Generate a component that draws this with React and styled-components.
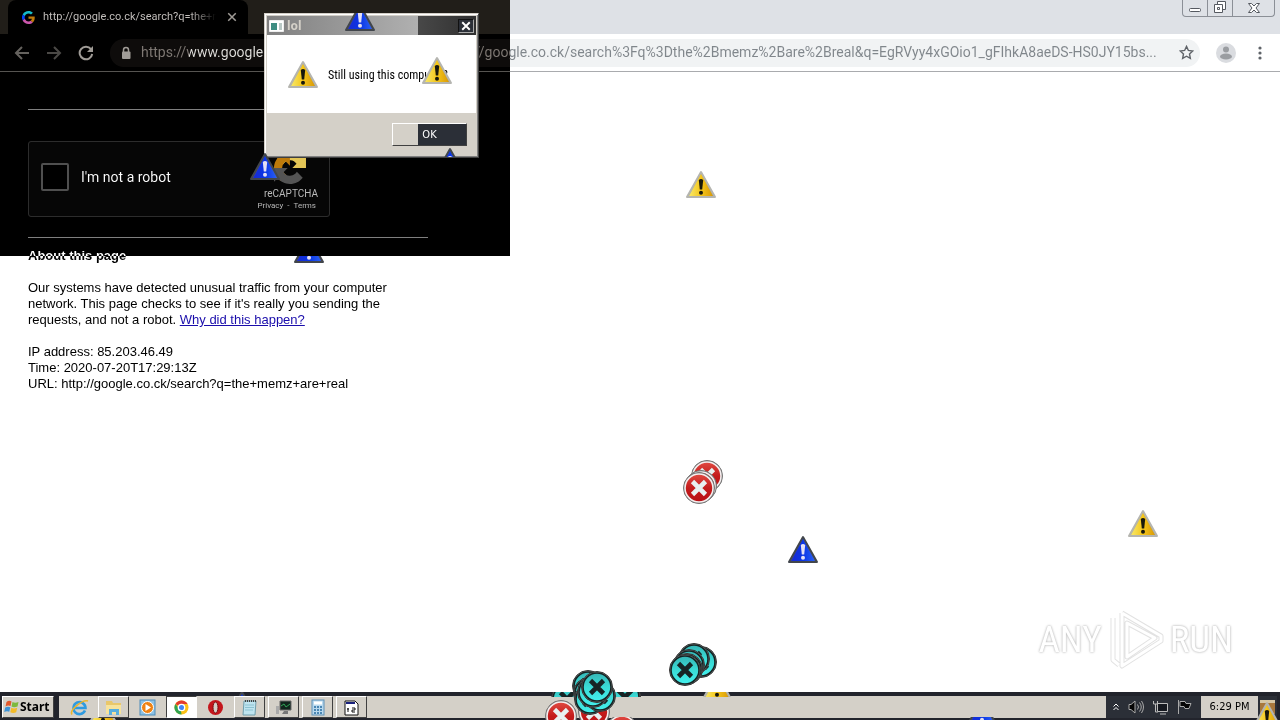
import React from 'react';
import styled, { createGlobalStyle } from 'styled-components';

const TAHOMA = '"DejaVu Sans Condensed", "DejaVu Sans", sans-serif';
const ARIAL = '"Liberation Sans", Arial, sans-serif';

const Global = createGlobalStyle`
  * { box-sizing: border-box; }
  body { margin: 0; background: #fff; font-family: ${ARIAL}; color: #000; }
  button, input { font: inherit; margin: 0; padding: 0; }
  button { border: 0; background: none; color: inherit; }
  svg { display: block; flex: none; }
`;

const Desktop = styled.div`
  position: relative;
  isolation: isolate;
  display: flex;
  flex-direction: column;
  min-height: 100vh;
  overflow: hidden;
  background: #fff;
`;

/* ---------- browser window ---------- */
const TabStrip = styled.header`
  display: flex;
  justify-content: space-between;
  height: 34px;
  padding: 0 5px 0 8px;
  background: #dee1e6;
`;
const Tab = styled.div`
  display: flex;
  align-items: center;
  gap: 8px;
  width: 240px;
  padding: 0 8px 0 14px;
  border-radius: 8px 8px 0 0;
  background: #fff;
  color: #3c4043;
`;
const TabTitle = styled.span`
  flex: 1;
  min-width: 0;
  white-space: nowrap;
  font: 11px/16px Roboto, sans-serif;
  mask-image: linear-gradient(90deg, #000 85%, transparent);
`;
const IconButton = styled.button`
  display: grid;
  place-items: center;
  width: ${(p) => p.$size || 16}px;
  height: ${(p) => p.$size || 16}px;
`;
const WindowControls = styled.div`
  display: flex;
  height: 17px;
  border: 1px solid #8b8f96;
  border-top: 0;
  border-radius: 0 0 4px 4px;
`;
const WindowControl = styled.button`
  display: grid;
  place-items: center;
  width: ${(p) => p.$width}px;
  & + & { border-left: 1px solid #8b8f96; }
`;
const Toolbar = styled.div`
  display: flex;
  align-items: center;
  gap: 16px;
  height: 38px;
  padding: 0 12px 0 14px;
  background: #fff;
  border-bottom: 1px solid #a9abae;
`;
const AddressBar = styled.form`
  display: flex;
  flex: 1;
  align-items: center;
  gap: 9px;
  height: 28px;
  padding: 0 6px 0 10px;
  border-radius: 14px;
  background: #f1f3f4;
`;
const Address = styled.input`
  flex: 1;
  min-width: 0;
  height: 24px;
  padding-bottom: 2px;
  border: 0;
  outline: 0;
  color: #3c4043;
  font: 14px/22px Roboto, sans-serif;
  background: linear-gradient(90deg, #80868b 48px, #202124 48px 152px, #80868b 152px);
  background-clip: text;
  -webkit-text-fill-color: transparent;
`;

/* ---------- page ---------- */
const Page = styled.main`
  flex: 1;
  width: 100%;
  max-width: 456px;
  padding: 37px 28px 0;
  font-size: 13px;
  line-height: 16px;
`;
const Rule = styled.hr`
  height: 1px;
  margin: 0;
  border: 0;
  background: #808080;
`;
const Captcha = styled.section`
  display: flex;
  align-items: center;
  justify-content: space-between;
  width: 302px;
  height: 76px;
  margin: 31px 0 20px;
  padding: 0 11px 0 12px;
  border: 1px solid #d3d3d3;
  border-radius: 3px;
  background: #f9f9f9;
`;
const CheckLabel = styled.label`
  display: flex;
  align-items: center;
  gap: 12px;
  padding-bottom: 4px;
  font: 14px/18px Roboto, sans-serif;
`;
const Check = styled.input`
  appearance: none;
  width: 28px;
  height: 28px;
  border: 2px solid #b0b0b0;
  border-radius: 2px;
  background: #fff;
`;
const Brand = styled.div`
  display: flex;
  flex-direction: column;
  align-items: flex-end;
  padding-top: 6px;
  color: #444;
  font: 10px/12px Roboto, sans-serif;
  svg { margin: 0 12px 4px 0; }
`;
const Legal = styled.div`
  display: flex;
  gap: 4px;
  padding-right: 2px;
  font-size: 8px;
  a { color: inherit; text-decoration: none; }
`;
const Heading = styled.h1`
  margin: 10px 0 16px;
  font-size: 13px;
  line-height: 16px;
`;
const Paragraph = styled.p`
  margin: 0 0 16px;
  white-space: pre-line;
  a { color: #1a0dab; }
`;
const InvertedPatch = styled.div`
  position: absolute;
  top: 0;
  left: 0;
  width: 510px;
  height: 256px;
  background: #fff;
  mix-blend-mode: difference;
  pointer-events: none;
`;

/* ---------- message box ---------- */
const Dialog = styled.section`
  position: absolute;
  left: 264px;
  top: 13px;
  width: 215px;
  padding: 2px;
  border: 1px solid;
  border-color: #d4d0c8 #404040 #404040 #d4d0c8;
  background: #d4d0c8;
  box-shadow: inset 1px 1px #fff, inset -1px -1px #808080;
  font: 12px/14px "Roboto Condensed", Roboto, sans-serif;
`;
const TitleBar = styled.header`
  display: flex;
  align-items: center;
  gap: 3px;
  height: 19px;
  padding: 0 2px;
  background: linear-gradient(90deg, #808080, #b0b0b0 151px, #484848 151px, #303030);
  color: #d4d0c8;
`;
const DialogTitle = styled.h2`
  flex: 1;
  margin: 0;
  font: bold 12px/14px "Noto Sans", sans-serif;
`;
const CloseButton = styled.button`
  display: grid;
  place-items: center;
  width: 16px;
  height: 14px;
  border: 1px solid;
  border-color: #111 #aaa #aaa #111;
  background: #2b2f37;
`;
const Message = styled.div`
  display: flex;
  align-items: center;
  gap: 9px;
  height: 78px;
  padding: 2px 0 0 20px;
  background: #fff;
`;
const DialogFooter = styled.footer`
  display: flex;
  justify-content: flex-end;
  padding: 10px 9px 9px;
`;
const OkButton = styled.button`
  width: 75px;
  height: 23px;
  border: 1px solid;
  border-color: #fff #404040 #404040 #fff;
  background: linear-gradient(90deg, #d4d0c8 25px, #2b2f37 25px);
  color: #fff;
  font: 11px/14px ${TAHOMA};
`;

/* ---------- taskbar ---------- */
const Taskbar = styled.footer`
  display: flex;
  height: 28px;
  padding: 4px 0 2px 2px;
  background: #22242c;
  font: 11px/14px ${TAHOMA};
`;
const StartButton = styled.button`
  display: flex;
  align-items: center;
  width: 52px;
  margin-right: 5px;
  padding-left: 1px;
  border: 1px solid;
  border-color: #fff #404040 #404040 #fff;
  background: #d4d0c8;
  font: bold 12px/14px "Noto Sans", sans-serif;
`;
const TaskList = styled.nav`
  display: flex;
  flex: 1;
  gap: 3px;
  padding-left: 5px;
  background: #d4d0c8;
`;
const Task = styled.button`
  display: grid;
  place-items: center;
  width: 31px;
  border: 1px solid;
  border-color: ${(p) => (p.$state === 'open' ? '#fff #404040 #404040 #fff' : p.$state === 'active' ? '#404040 #fff #fff #404040' : 'transparent')};
  background: ${(p) => (p.$state === 'active' ? '#fff' : 'none')};
`;
const Tray = styled.div`
  display: flex;
  align-items: center;
  gap: 8px;
  width: 95px;
  padding-left: 6px;
  background: #2b2f37;
`;
const Clock = styled.time`
  width: 57px;
  padding-top: 4px;
  background: #d4d0c8;
  text-align: center;
`;
const ShowDesktop = styled.button`
  width: 22px;
  border-right: 3px solid #22242c;
  background: #2b2f37;
`;

/* ---------- stray warning and error icons ---------- */
const Strays = styled.div`
  position: absolute;
  inset: 0;
  overflow: hidden;
  pointer-events: none;
`;
const Stray = styled.svg`
  position: absolute;
  left: ${(p) => p.$x}px;
  top: ${(p) => p.$y}px;
`;
const Watermark = styled.div`
  position: absolute;
  right: 47px;
  bottom: 48px;
  display: flex;
  align-items: center;
  gap: 4px;
  color: #fff;
  font: 37px/64px "Roboto Condensed", ${ARIAL};
  text-shadow: 0 0 2px #bbb, 0 0 3px #ccc;
`;

function TriangleArt({ inverted }) {
  return (
    <>
      <path d="M16 3 30 28H2Z" fill={inverted ? '#56565c' : '#a8a8a4'} stroke={inverted ? '#42464c' : '#b5b5b0'} strokeWidth="2" strokeLinejoin="round" />
      <path d="M16 5 28 27H4Z" fill={inverted ? 'url(#blue)' : 'url(#gold)'} />
      <path d="M13.800 11q2.200-1.800 4.400 0l-1 9.500h-2.400z" fill={inverted ? '#e4e0f4' : '#18180c'} />
      <circle cx="16" cy="23.800" r="2" fill={inverted ? '#e4e0f4' : '#18180c'} />
    </>
  );
}

function CrossArt({ inverted }) {
  return (
    <>
      <circle cx="16" cy="16" r="15.500" fill={inverted ? '#999' : '#666'} stroke={inverted ? '#333' : '#777'} />
      <circle cx="16" cy="16" r="14" fill={inverted ? 'url(#teal)' : 'url(#red)'} stroke={inverted ? '#152424' : '#f5eeee'} strokeWidth="1.600" />
      <path d="m9.500 9.500 13 13m0-13-13 13" fill="none" stroke={inverted ? '#172425' : '#e8f0f0'} strokeWidth="4.600" />
    </>
  );
}

// `from` and `rows` keep only a horizontal band of the 32px icon.
function StrayIcon({ kind = 'triangle', inverted, x, y, from = 0, rows = 32 }) {
  return (
    <Stray $x={x} $y={y + from} width="32" height={rows} viewBox={`0 ${from} 32 ${rows}`} aria-hidden="true">
      {kind === 'cross' ? <CrossArt inverted={inverted} /> : <TriangleArt inverted={inverted} />}
    </Stray>
  );
}

const strays = [
  { x: 344, y: 2, inverted: true, from: 11, rows: 21 },
  { x: 421, y: 55 },
  { x: 249, y: 151, inverted: true },
  { x: 434, y: 146, inverted: true, from: 0, rows: 11 },
  { x: 293, y: 234, inverted: true, from: 22, rows: 10 },
  { x: 685, y: 169 },
  { x: 1127, y: 508 },
  { x: 787, y: 534, inverted: true },
  { x: 701, y: 671, from: 21, rows: 5 },
  { x: 226, y: 689, inverted: true, from: 3, rows: 4 },
  { x: 87, y: 696, from: 22, rows: 2 },
  { x: 966, y: 696, inverted: true, from: 21, rows: 3 },
  { x: 1251, y: 700 },
  { kind: 'cross', x: 691, y: 460 },
  { kind: 'cross', x: 685, y: 470 },
  { kind: 'cross', x: 683, y: 472 },
  { kind: 'cross', inverted: true, x: 685, y: 646 },
  { kind: 'cross', inverted: true, x: 678, y: 643 },
  { kind: 'cross', inverted: true, x: 673, y: 649 },
  { kind: 'cross', inverted: true, x: 671, y: 653 },
  { kind: 'cross', inverted: true, x: 669, y: 654 },
  { kind: 'cross', inverted: true, x: 551, y: 683, from: 9, rows: 5 },
  { kind: 'cross', inverted: true, x: 609, y: 681, from: 11, rows: 5 },
  { kind: 'cross', x: 606, y: 714, from: 3 },
  { kind: 'cross', x: 578, y: 696 },
  { kind: 'cross', x: 545, y: 700 },
  { kind: 'cross', inverted: true, x: 572, y: 670 },
  { kind: 'cross', inverted: true, x: 573, y: 677 },
  { kind: 'cross', inverted: true, x: 574, y: 683 },
  { kind: 'cross', inverted: true, x: 584, y: 680 },
  { kind: 'cross', inverted: true, x: 577, y: 676 },
  { kind: 'cross', inverted: true, x: 581, y: 671 },
];

const Gradients = () => (
  <svg width="0" height="0" aria-hidden="true">
    <defs>
      <linearGradient id="gold" x2="1"><stop stopColor="#f7e86a" /><stop offset=".5" stopColor="#f5c61a" /><stop offset="1" stopColor="#d99a08" /></linearGradient>
      <linearGradient id="blue" x2="1"><stop stopColor="#1a2ad0" /><stop offset=".5" stopColor="#0a35e6" /><stop offset="1" stopColor="#2a60f4" /></linearGradient>
      <linearGradient id="red" x2="0" y2="1"><stop stopColor="#e04a42" /><stop offset=".5" stopColor="#c41c1c" /><stop offset="1" stopColor="#b80f14" /></linearGradient>
      <linearGradient id="teal" x2="0" y2="1"><stop stopColor="#35b5b5" /><stop offset=".5" stopColor="#3adbd6" /><stop offset="1" stopColor="#43efec" /></linearGradient>
    </defs>
  </svg>
);

const GoogleG = () => (
  <svg width="13" height="13" viewBox="0 0 48 48">
    <path fill="#EA4335" d="M24 9.500c3.500 0 6.700 1.200 9.200 3.600l6.900-6.900C35.900 2.400 30.500 0 24 0 14.600 0 6.500 5.400 2.600 13.200l8 6.200C12.400 13.700 17.700 9.500 24 9.500z" />
    <path fill="#4285F4" d="M47 24.500c0-1.600-.2-3.100-.4-4.500H24v9h12.900c-.6 3-2.300 5.500-4.800 7.200l7.700 6C44.400 38 47 31.800 47 24.500z" />
    <path fill="#FBBC05" d="M10.500 28.600a14.500 14.500 0 0 1 0-9.200l-8-6.200a24 24 0 0 0 0 21.600z" />
    <path fill="#34A853" d="M24 48c6.500 0 11.900-2.100 15.900-5.800l-7.700-6c-2.200 1.500-4.900 2.300-8.200 2.300-6.300 0-11.600-4.200-13.500-9.900l-8 6.200C6.500 42.600 14.600 48 24 48z" />
  </svg>
);

const RecaptchaLogo = () => (
  <svg width="32" height="32" viewBox="0 0 64 64">
    <path fill="#1c3aa9" d="M64 31.955l-.033-1.370V4.687l-7.160 7.160C50.948 4.674 42.033.093 32.050.093c-10.400 0-19.622 4.960-25.458 12.640l11.736 11.860a15.550 15.550 0 0 1 4.754-5.334c2.050-1.600 4.952-2.906 8.968-2.906.485 0 .860.057 1.135.163 4.976.393 9.288 3.140 11.828 7.124l-8.307 8.307L64 31.953" />
    <path fill="#4285f4" d="M31.862.094l-1.370.033H4.594l7.160 7.160C4.580 13.147 0 22.060 0 32.046c0 10.400 4.960 19.622 12.640 25.458L24.500 45.768a15.550 15.550 0 0 1-5.334-4.754c-1.600-2.050-2.906-4.952-2.906-8.968 0-.485.057-.860.163-1.135.393-4.976 3.140-9.288 7.124-11.828l8.307 8.307L31.860.095" />
    <path fill="#ababab" d="M.001 32.045l.033 1.370v25.898l7.160-7.160c5.860 7.173 14.774 11.754 24.760 11.754 10.400 0 19.622-4.960 25.458-12.640l-11.736-11.860a15.550 15.550 0 0 1-4.754 5.334c-2.050 1.600-4.952 2.906-8.968 2.906-.485 0-.860-.057-1.135-.163-4.976-.393-9.288-3.140-11.828-7.124l8.307-8.307c-10.522.04-22.400.066-27.295-.005" />
  </svg>
);

const Stroke = ({ size = 16, color = '#5f6368', width = 2, children }) => (
  <svg width={size} height={size} viewBox="0 0 16 16" fill="none" stroke={color} strokeWidth={width}>{children}</svg>
);

const taskIcons = [
  { name: 'Internet Explorer', art: (
    <><path d="M15 12.500A6 6 0 1 1 15.500 10H5" fill="none" stroke="#2f9be0" strokeWidth="2.600" /><path d="M2 16.500C-1 12 13 1 18 3" fill="none" stroke="#eab52c" strokeWidth="1.600" /></>) },
  { name: 'Windows Explorer', state: 'open', art: (
    <><path d="M2 3h6l1 2h8v11H2z" fill="#e9c76a" /><path d="M2 7h15v9H2z" fill="#f7e39c" /><path d="M5 17v-6h10v6h-3v-3H8v3z" fill="#58aede" /></>) },
  { name: 'Media Player', art: (
    <><rect x="2" y="2" width="15" height="15" fill="#8cc1e4" stroke="#4f8cba" /><circle cx="9.500" cy="9.500" r="6" fill="#ef8213" stroke="#fff" /><path d="m7.500 6 5.500 3.500-5.500 3.500z" fill="#fff" /></>) },
  { name: 'Chrome', state: 'active', art: (
    <><circle cx="9.500" cy="9.500" r="7" fill="#fbc116" /><path d="M9.500 9.500 3.400 6a7 7 0 0 1 12.200 0H9.500z" fill="#e33b2e" /><path d="M3.400 6 9 13l.5 3.500A7 7 0 0 1 3.400 6z" fill="#31a350" /><circle cx="9.500" cy="9.500" r="3.200" fill="#4285f4" stroke="#fff" strokeWidth="1.300" /></>) },
  { name: 'Opera', art: (
    <><circle cx="9.500" cy="9.500" r="7.500" fill="#c4161c" /><ellipse cx="9.500" cy="9.500" rx="2.500" ry="5.500" fill="#d4d0c8" stroke="#7c0c10" /></>) },
  { name: 'Notepad', state: 'open', art: (
    <><path d="M4 3h12l-1 14H3z" fill="#bfe4ef" stroke="#6f9eac" /><path d="M5 3h11" stroke="#444" strokeWidth="2" strokeDasharray="1 1" /><path d="M5 7h9M5 9.500h9M5 12h8" stroke="#8cc3d2" /></>) },
  { name: 'Computer Management', state: 'open', art: (
    <><path d="M6 3h11v9H6z" fill="#10251d" stroke="#666" /><path d="m7 8 3-2 2 3 4-3" fill="none" stroke="#2fa456" /><path d="M10 13h4v3H8z" fill="#777" /><path d="M2 8h3v8H2z" fill="#aaa" /></>) },
  { name: 'Calculator', state: 'open', art: (
    <><rect x="4" y="2" width="12" height="15" fill="#b9d9ee" stroke="#5e90b6" /><path d="M6 5h8" stroke="#fff" strokeWidth="3" /><path d="M6 9h8M6 12h8M6 15h8" stroke="#4a86b3" strokeWidth="2" strokeDasharray="2 1" /></>) },
  { name: 'Date and Time', state: 'open', art: (
    <><path d="M3 3h10l3 3v11H3z" fill="#fff" stroke="#111" /><path d="M4 5h9" stroke="#18207c" strokeWidth="2" /><path d="M6 10v4M5 11h2M10 10h3v2h-3v2h3" fill="none" stroke="#111" /></>) },
];

export default function App() {
  return (
    <Desktop>
      <Global />
      <Gradients />
      <TabStrip>
        <Tab>
          <GoogleG />
          <TabTitle>http://google.co.ck/search?q=the+m</TabTitle>
          <IconButton aria-label="Close tab"><Stroke size={12}><path d="m3 3 10 10M13 3 3 13" /></Stroke></IconButton>
        </Tab>
        <WindowControls>
          <WindowControl $width={24} aria-label="Minimize"><Stroke color="#555960" width={1}><rect x="2.500" y="8.500" width="11" height="3" rx="1" fill="#fff" /></Stroke></WindowControl>
          <WindowControl $width={25} aria-label="Restore"><Stroke color="#555960" width={1}><path d="M5.500 1.500h8v8h-8z" fill="#fff" /><path d="M2.500 4.500h8v8h-8z" fill="#fff" /><path d="M5.500 7.500h2v2h-2z" /></Stroke></WindowControl>
          <WindowControl $width={42} aria-label="Close"><Stroke color="#555960" width={1}><path d="M2.500 3.500h3L8 6l2.500-2.500h3L10 8l3.500 4.500h-3L8 10l-2.500 2.500h-3L6 8z" fill="#fff" /></Stroke></WindowControl>
        </WindowControls>
      </TabStrip>
      <Toolbar>
        <IconButton aria-label="Back"><Stroke color="#9a9da1"><path d="M15 8H2m6-6L2 8l6 6" /></Stroke></IconButton>
        <IconButton aria-label="Forward"><Stroke color="#b4b6b9"><path d="M1 8h13M8 2l6 6-6 6" /></Stroke></IconButton>
        <IconButton aria-label="Reload"><Stroke><path d="M13 4.200A6.300 6.300 0 1 0 14.200 9" /><path d="M15 1v6H9z" fill="#5f6368" stroke="none" /></Stroke></IconButton>
        <AddressBar>
          <svg width="12" height="14" viewBox="0 0 12 14"><path d="M3.500 6V4a2.500 2.500 0 0 1 5 0v2" fill="none" stroke="#5f6368" strokeWidth="1.500" /><rect x="2" y="5.500" width="8.500" height="7.500" rx="1" fill="#5f6368" /></svg>
          <Address
            aria-label="Address"
            readOnly
            value="https://www.google.com/sorry/index?continue=https://google.co.ck/search%3Fq%3Dthe%2Bmemz%2Bare%2Breal&q=EgRVyy4xGOio1_gFIhkA8aeDS-HS0JY15bs..."
          />
          <IconButton type="button" aria-label="Bookmark"><Stroke size={15} width={1.5}><path d="m8 1.500 2 4.300 4.700.6-3.500 3.200.9 4.700L8 12l-4.100 2.300.9-4.700L1.300 6.400 6 5.800z" /></Stroke></IconButton>
        </AddressBar>
        <IconButton $size={20} aria-label="Profile"><svg width="20" height="20" viewBox="0 0 20 20"><circle cx="10" cy="10" r="10" fill="#dadce0" /><circle cx="10" cy="6.500" r="3" fill="#9a9da1" /><ellipse cx="10" cy="13.500" rx="6" ry="3" fill="#9a9da1" /></svg></IconButton>
        <IconButton aria-label="Menu"><svg width="4" height="16" viewBox="0 0 4 16" fill="#5f6368"><circle cx="2" cy="3" r="1.600" /><circle cx="2" cy="8" r="1.600" /><circle cx="2" cy="13" r="1.600" /></svg></IconButton>
      </Toolbar>
      <Page>
        <Rule />
        <Captcha>
          <CheckLabel><Check type="checkbox" />I'm not a robot</CheckLabel>
          <Brand>
            <RecaptchaLogo />
            reCAPTCHA
            <Legal><a href="#privacy">Privacy</a>-<a href="#terms">Terms</a></Legal>
          </Brand>
        </Captcha>
        <Rule />
        <Heading>About this page</Heading>
        <Paragraph>
          Our systems have detected unusual traffic from your computer network. This page checks to see if it's really you sending the requests, and not a robot. <a href="#why">Why did this happen?</a>
        </Paragraph>
        <Paragraph>{'IP address: 85.203.46.49\nTime: 2020-07-20T17:29:13Z\nURL: http://google.co.ck/search?q=the+memz+are+real'}</Paragraph>
      </Page>
      <InvertedPatch />

      <Taskbar>
        <StartButton>
          <svg width="16" height="16" viewBox="0 0 16 16"><path d="M2.500 3Q5 1 7.500 2.500L6.500 7Q4 6 1.500 7.500z" fill="#e2572a" /><path d="M8.500 3Q11 4.500 14.500 3l-1 4.500Q10 9 7.500 7.500z" fill="#7db93c" /><path d="M1.200 8.500Q4 7 6.300 8.300l-1 4.500Q3 11.500.2 13z" fill="#3c92d6" /><path d="M7.300 8.800Q10 10 13.200 8.800l-1 4.500Q9 14.500 6.300 13.200z" fill="#f3bb28" /></svg>
          Start
        </StartButton>
        <TaskList>
          {taskIcons.map((t) => (
            <Task key={t.name} $state={t.state} aria-label={t.name}><svg width="19" height="19" viewBox="0 0 19 19">{t.art}</svg></Task>
          ))}
        </TaskList>
        <Tray>
          <Stroke size={8} color="#fff"><path d="m3 7 5-5 5 5M3 14l5-5 5 5" /></Stroke>
          <Stroke color="#aaa" width={1}><path d="M1 5.500h2l4-3.500v12l-4-3.500H1z" fill="#050505" /><path d="M9.500 5.500q2 2.500 0 5M11.500 3.500q3.500 4.500 0 9M13.500 2q4 6 0 12" /></Stroke>
          <Stroke color="#bbb" width={1}><path d="M5.500 4.500h10v8h-10z" fill="#15181f" /><path d="M8 15h6M1.500 2v3h4V2M3.500 5v8H6" /></Stroke>
          <Stroke color="#aaa" width={1}><path d="M2.500 1v14" /><path d="M4 2.500h5l1 2h5l-2 5H9l-1-2H4z" fill="#050505" /></Stroke>
        </Tray>
        <Clock>6:29 PM</Clock>
        <ShowDesktop aria-label="Show desktop"><svg width="18" height="18" viewBox="0 0 18 18"><path d="M2 2h15v14H2z" fill="#a8783c" /><path d="M2 2h15v3H2z" fill="#d6c7a4" /></svg></ShowDesktop>
      </Taskbar>

      <Dialog role="dialog" aria-labelledby="dialog-title">
        <TitleBar>
          <svg width="15" height="14" viewBox="0 0 15 14"><path d="M.5 1.500h14v11H.5z" fill="#fff" stroke="#eee" /><path d="M2 4h6v7H2z" fill="#3f8d82" /><path d="M10 4h3v7h-3z" fill="#b9c8c5" /></svg>
          <DialogTitle id="dialog-title">lol</DialogTitle>
          <CloseButton aria-label="Close"><Stroke size={10} color="#fff" width={3}><path d="m2 2 12 12M14 2 2 14" /></Stroke></CloseButton>
        </TitleBar>
        <Message>
          <svg width="32" height="32" viewBox="0 0 32 32"><TriangleArt /></svg>
          Still using this computer?
        </Message>
        <DialogFooter><OkButton>OK</OkButton></DialogFooter>
      </Dialog>

      <Watermark>
        ANY
        <svg width="60" height="64" viewBox="0 0 58 64" fill="none" strokeLinejoin="round">
          <path d="M15 5 54 28v5L15 58V5m5 10v34l28-19zM6 10v42l6 5" stroke="#e2e2e2" strokeWidth="5" />
          <path d="M15 5 54 28v5L15 58V5m5 10v34l28-19zM6 10v42l6 5" stroke="#fff" strokeWidth="3" />
        </svg>
        RUN
      </Watermark>
      <Strays>{strays.map((s, i) => <StrayIcon key={i} {...s} />)}</Strays>
    </Desktop>
  );
}
